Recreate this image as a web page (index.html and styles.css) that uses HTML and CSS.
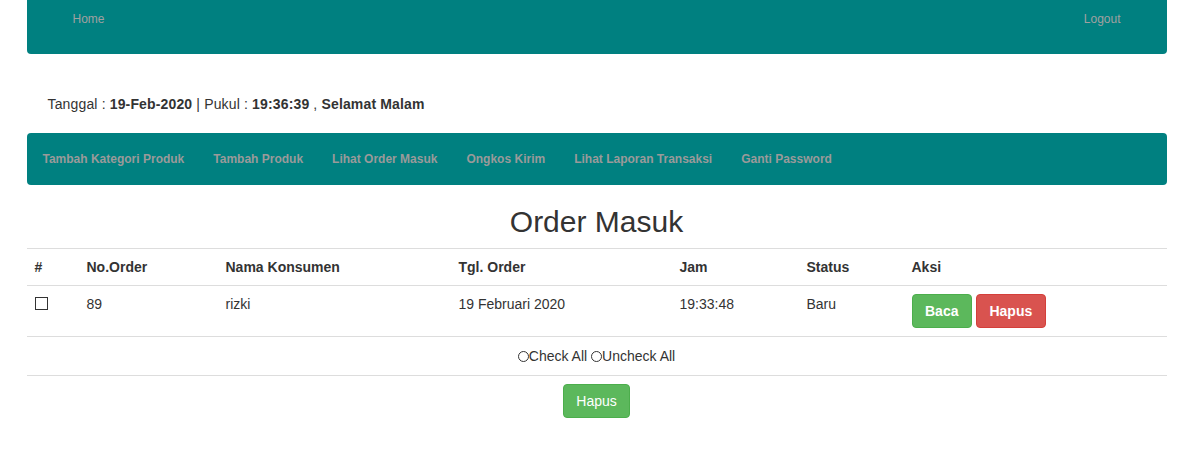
FILE: index.html
```html
<!DOCTYPE html>
<html lang="id">
<head>
<meta charset="utf-8">
<title>Order Masuk</title>
<link rel="stylesheet" href="styles.css">
</head>
<body>
<div class="container">
  <nav class="topbar">
    <a href="#" class="toplink">Home</a>
    <a href="#" class="toplink">Logout</a>
  </nav>

  <p class="dateline">Tanggal : <b>19-Feb-2020</b> | Pukul : <b>19:36:39</b> , <b>Selamat Malam</b></p>

  <nav class="menubar">
    <a href="#">Tambah Kategori Produk</a>
    <a href="#">Tambah Produk</a>
    <a href="#">Lihat Order Masuk</a>
    <a href="#">Ongkos Kirim</a>
    <a href="#">Lihat Laporan Transaksi</a>
    <a href="#">Ganti Password</a>
  </nav>

  <h2 class="title">Order Masuk</h2>

  <table class="orders">
    <colgroup>
      <col class="c1"><col class="c2"><col class="c3"><col class="c4"><col class="c5"><col class="c6"><col class="c7">
    </colgroup>
    <thead>
      <tr>
        <th>#</th><th>No.Order</th><th>Nama Konsumen</th><th>Tgl. Order</th><th>Jam</th><th>Status</th><th>Aksi</th>
      </tr>
    </thead>
    <tbody>
      <tr>
        <td><span class="checkbox"></span></td>
        <td>89</td>
        <td>rizki</td>
        <td>19 Februari 2020</td>
        <td>19:33:48</td>
        <td>Baru</td>
        <td class="actions"><a href="#" class="btn btn-success bold">Baca</a><a href="#" class="btn btn-danger bold">Hapus</a></td>
      </tr>
      <tr>
        <td colspan="7" class="checkrow"><span class="radio"></span>Check All <span class="radio"></span>Uncheck All</td>
      </tr>
    </tbody>
  </table>

  <div class="submit">
    <button class="btn btn-success">Hapus</button>
  </div>
</div>
</body>
</html>
```

FILE: styles.css
```css
* { box-sizing: border-box; }
html, body { margin: 0; padding: 0; background: #fff; }
body {
  font-family: "Liberation Sans", Arial, sans-serif;
  font-size: 14px;
  line-height: 20px;
  color: #333;
}
.container {
  width: 1140px;
  margin: 0 auto;
}
a { text-decoration: none; }

.topbar {
  background: #008080;
  height: 54px;
  border-radius: 0 0 4px 4px;
  display: flex;
  justify-content: space-between;
  padding: 9px 46px 0 46px;
}
.toplink {
  font-size: 12px;
  color: #a0a0a0;
  line-height: 20px;
}

.dateline {
  margin: 40px 0 0;
  padding-left: 21px;
  line-height: 20px;
  font-size: 14px;
  letter-spacing: 0.15px;
}
.dateline b { font-weight: bold; }

.menubar {
  margin-top: 19px;
  background: #008080;
  height: 52px;
  border-radius: 4px;
  display: flex;
  align-items: center;
  padding: 0 1.5px;
}
.menubar a {
  font-size: 12px;
  font-weight: bold;
  color: #9a9a9a;
  padding: 0 14.5px;
  line-height: 20px;
}

.title {
  margin: 20px 0 10px;
  text-align: center;
  font-size: 30px;
  font-weight: 500;
  line-height: 33px;
  color: #333;
}

.orders {
  width: 100%;
  border-collapse: collapse;
  border-spacing: 0;
}
.c1 { width: 52px; }
.c2 { width: 139px; }
.c3 { width: 233px; }
.c4 { width: 221px; }
.c5 { width: 127px; }
.c6 { width: 105px; }
.c7 { width: 263px; }
.orders th, .orders td {
  padding: 8px;
  text-align: left;
  vertical-align: top;
  line-height: 20px;
  border-top: 1px solid #ddd;
}
.orders th { font-weight: bold; }
.orders thead th { border-bottom: 1px solid #ddd; vertical-align: bottom; }
.orders thead + tbody tr:first-child td { border-top: 0; }
.orders tbody tr:last-child td { border-bottom: 1px solid #ddd; }

.checkbox {
  display: inline-block;
  width: 13px;
  height: 13px;
  border: 1px solid #333;
  margin-top: 3px;
  vertical-align: top;
}
.actions { display: flex; gap: 4px; }

.checkrow {
  text-align: center !important;
  padding: 9px 8px !important;
}
.radio {
  display: inline-block;
  width: 11px;
  height: 11px;
  border: 1px solid #333;
  border-radius: 50%;
  vertical-align: -1px;
  margin-right: 0;
}

.btn {
  display: inline-block;
  padding: 6px 12px;
  font-family: inherit;
  font-size: 14px;
  line-height: 20px;
  border: 1px solid transparent;
  border-radius: 4px;
  color: #fff;
  text-align: center;
  cursor: pointer;
}
.bold { font-weight: bold; padding: 6px 12.5px; }
.btn-success { background: #5cb85c; border-color: #4cae4c; }
.btn-danger { background: #d9534f; border-color: #d43f3a; }

.submit {
  text-align: center;
  margin-top: 8px;
}
```
